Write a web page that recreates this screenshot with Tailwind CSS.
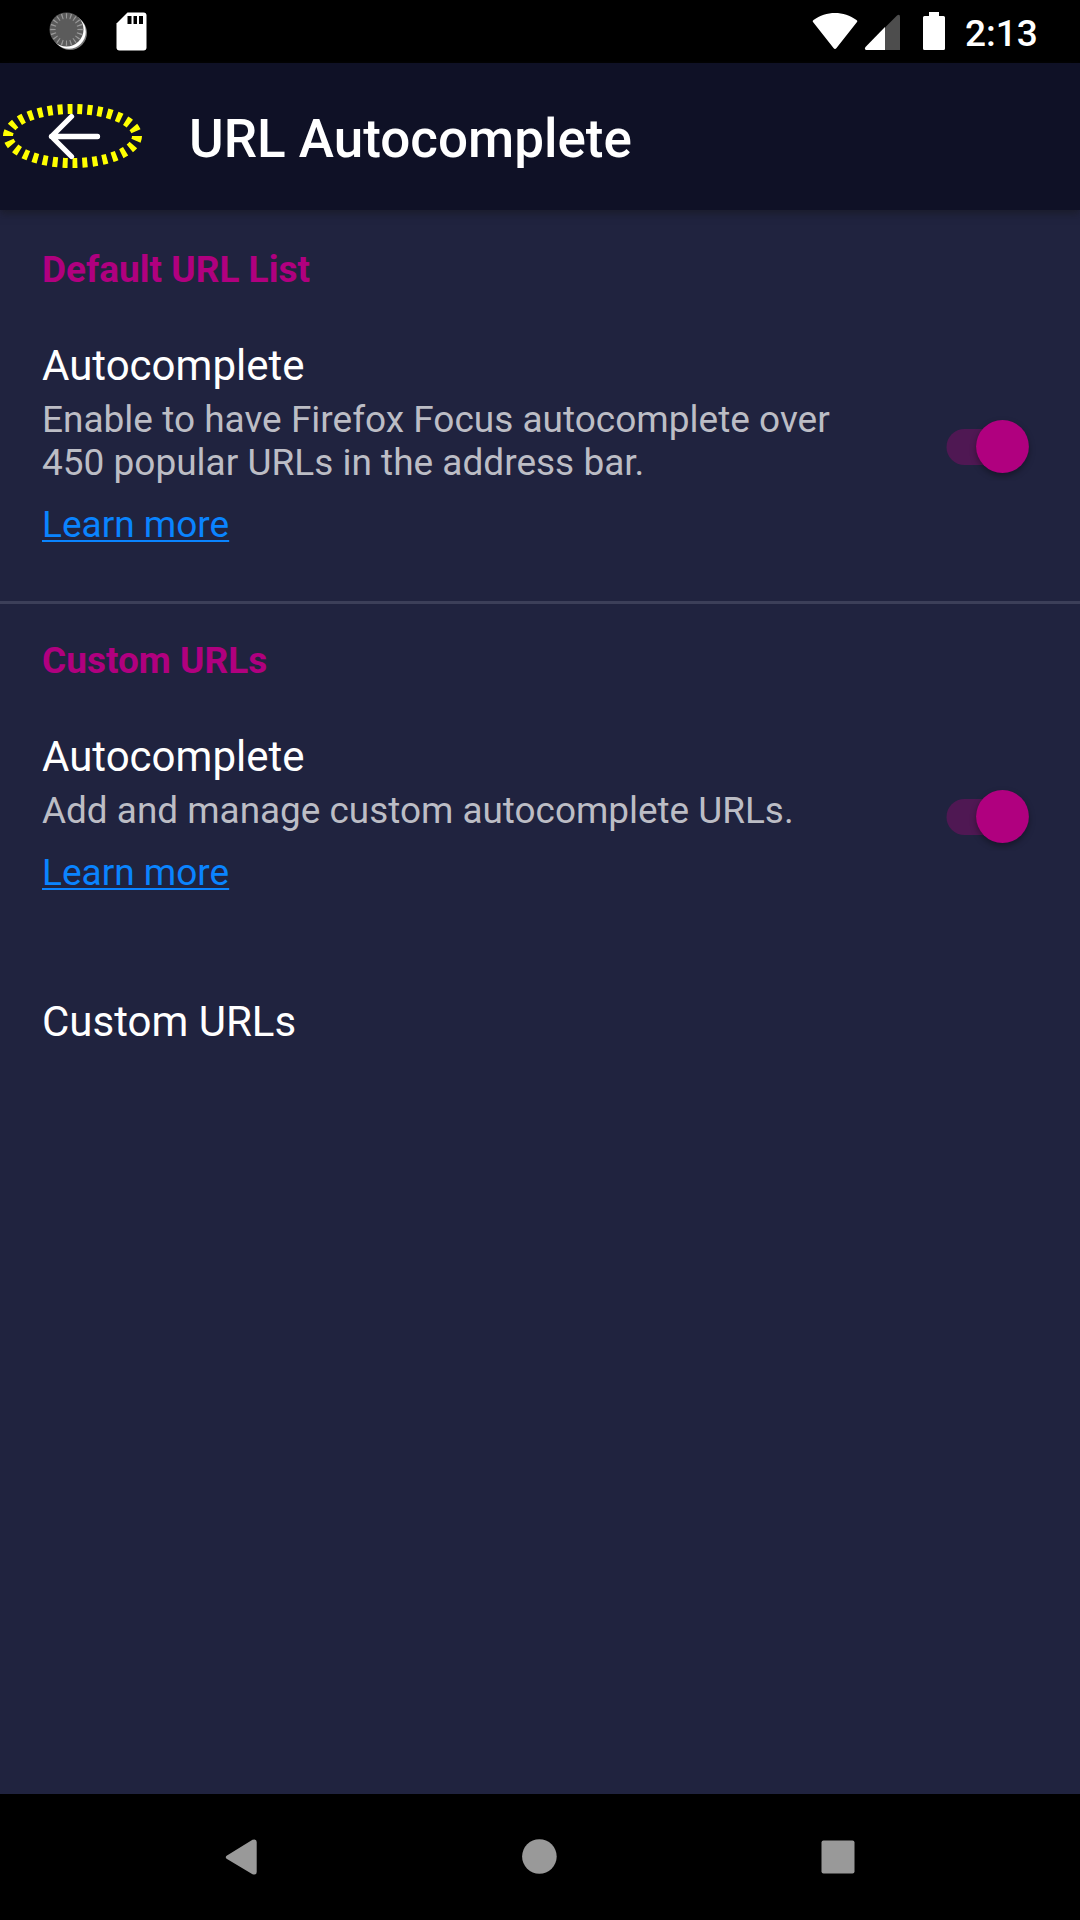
<!DOCTYPE html>
<html lang="en">
<head>
<meta charset="utf-8">
<title>URL Autocomplete</title>
<script src="https://cdn.jsdelivr.net/npm/@tailwindcss/browser@4"></script>
</head>
<body class="flex h-[1920px] w-[1080px] flex-col overflow-hidden bg-[#20233f] font-['Roboto',sans-serif] text-[37px] leading-[43px] text-white">
  <!-- Status bar -->
  <div class="flex h-[63px] shrink-0 items-center justify-between bg-black">
    <svg class="h-[63px] w-[160px]" viewBox="0 0 160 63">
      <circle cx="70" cy="33" r="17" fill="#777"/>
      <circle cx="68.8" cy="31.8" r="17" fill="#fff"/>
      <circle cx="66.5" cy="29.5" r="17" fill="#5b5b5b"/>
      <circle cx="66.5" cy="29.5" r="13.6" fill="none" stroke="#999" stroke-width="5.4" pathLength="200" stroke-dasharray="2.8 7.2" stroke-dashoffset="1.4"/>
      <path d="M127.500 12.500H143.500Q146.500 12.500 146.500 15.500V47.500Q146.500 50.500 143.500 50.500H119.500Q116.500 50.500 116.500 47.500V23.500Z" fill="#fff"/>
      <path d="M127.500 16h4v8h-4zM133.500 16h3.500v8h-3.500zM139 16h4v8h-4z" fill="#000"/>
    </svg>
    <div class="flex h-[63px]">
      <svg class="h-[63px] w-[165px]" viewBox="800 0 165 63">
        <path d="M813 22Q812 21 813.500 20C826 10.500 844 10.500 856.500 20Q858 21 857 22L836.500 48Q835 50 833.500 48Z" fill="#fff"/>
        <path d="M885 27.500L897 15.500Q900 13.500 900 17V50H885Z" fill="#4d4d4d"/>
        <path d="M885 27V50H866Q864 49 865.500 47Z" fill="#fff"/>
        <path d="M929 12h10v4h4.500q1.500 0 1.500 1.500v31q0 1.500-1.500 1.500h-19q-1.500 0-1.500-1.500v-31q0-1.500 1.500-1.500h4.500z" fill="#fff"/>
      </svg>
      <div class="w-[115px] pt-[12px] font-medium">2:13</div>
    </div>
  </div>
  <!-- App bar -->
  <header class="flex h-[147px] shrink-0 items-center bg-[#0f1126] shadow-[0_3px_8px_rgba(20,20,20,0.5)]">
    <svg class="h-[147px] w-[189px]" viewBox="0 63 189 147" fill="none">
      <ellipse cx="72.500" cy="136" rx="64.500" ry="27" stroke="#ff0" stroke-width="10" pathLength="300" stroke-dasharray="5 5"/>
      <path d="M97.500 136.500H51.500M71.500 116.500L51.500 136.500L71.500 156.500" stroke="#fff" stroke-width="5.300" stroke-linecap="round" stroke-linejoin="round"/>
    </svg>
    <h1 class="pt-[5px] text-[53px] leading-[62px] font-medium">URL Autocomplete</h1>
  </header>
  <main class="flex grow flex-col">
    <section class="h-[391px] px-[42px] pt-[38px]">
      <h2 class="font-bold text-[#b0007f]">Default URL List</h2>
      <div class="flex items-start justify-between pt-[50px]">
        <div>
          <h3 class="text-[42px] leading-[49px]">Autocomplete</h3>
          <p class="w-[830px] pt-[8px] text-[#bcbdc5]">Enable to have Firefox Focus autocomplete over<br>450 popular URLs in the address bar.</p>
          <a class="mt-[19px] block text-[#0a84ff] underline decoration-2 underline-offset-[3px]">Learn more</a>
        </div>
        <svg class="mt-[70px] h-[70px] w-[100px] shrink-0" viewBox="938 781 100 70">
          <rect x="946.500" y="799" width="74" height="36" rx="18" fill="#4f1853"/>
          <circle class="drop-shadow-[0_3px_3px_rgba(0,0,0,0.35)]" cx="1002.500" cy="816.500" r="26.400" fill="#b0007f"/>
        </svg>
      </div>
    </section>
    <div class="h-[3px] bg-[#3c3f59]"></div>
    <section class="px-[42px] pt-[35px]">
      <h2 class="font-bold text-[#b0007f]">Custom URLs</h2>
      <div class="flex items-start justify-between pt-[50px]">
        <div>
          <h3 class="text-[42px] leading-[49px]">Autocomplete</h3>
          <p class="pt-[8px] text-[36.9px] text-[#bcbdc5]">Add and manage custom autocomplete URLs.</p>
          <a class="mt-[19px] block text-[#0a84ff] underline decoration-2 underline-offset-[3px]">Learn more</a>
        </div>
        <svg class="mt-[49px] h-[70px] w-[100px] shrink-0" viewBox="938 781 100 70">
          <rect x="946.500" y="799" width="74" height="36" rx="18" fill="#4f1853"/>
          <circle class="drop-shadow-[0_3px_3px_rgba(0,0,0,0.35)]" cx="1002.500" cy="816.500" r="26.400" fill="#b0007f"/>
        </svg>
      </div>
      <h3 class="pt-[103px] text-[42px] leading-[49px]">Custom URLs</h3>
    </section>
  </main>
  <!-- Navigation bar -->
  <nav class="h-[126px] shrink-0 bg-black">
    <svg class="h-[126px] w-[1080px]" viewBox="0 1794 1080 126" fill="#999">
      <path d="M227 1855.500Q224.500 1857 227 1859L252.500 1874.200Q256.700 1875.500 256.700 1872V1842Q256.700 1838.500 252.500 1839.800Z"/>
      <circle cx="539.400" cy="1856.500" r="17.300"/>
      <rect x="821.500" y="1840.500" width="33" height="33" rx="2"/>
    </svg>
  </nav>
</body>
</html>
